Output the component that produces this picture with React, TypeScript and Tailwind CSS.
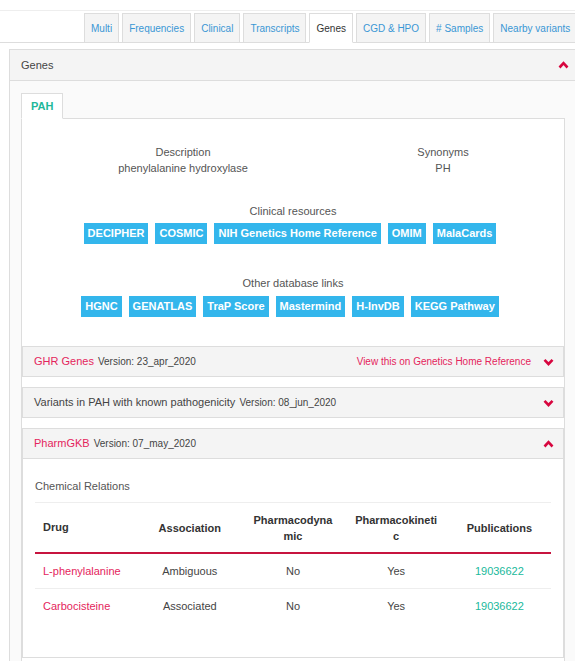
import { ReactNode } from 'react'

const tabs = ['Multi', 'Frequencies', 'Clinical', 'Transcripts', 'Genes', 'CGD & HPO', '# Samples', 'Nearby variants']
const clinical = ['DECIPHER', 'COSMIC', 'NIH Genetics Home Reference', 'OMIM', 'MalaCards']
const otherLinks = ['HGNC', 'GENATLAS', 'TraP Score', 'Mastermind', 'H-InvDB', 'KEGG Pathway']

const relations = [
  { drug: 'L-phenylalanine', association: 'Ambiguous', pd: 'No', pk: 'Yes', pub: '19036622' },
  { drug: 'Carbocisteine', association: 'Associated', pd: 'No', pk: 'Yes', pub: '19036622' },
]

function Chevron({ up }: { up?: boolean }) {
  return (
    <svg width="11" height="8" viewBox="0 0 11 8" className="shrink-0">
      <polyline
        points={up ? '1.5,6.5 5.5,2.2 9.5,6.5' : '1.5,1.8 5.5,6 9.5,1.8'}
        fill="none"
        stroke="#d7063f"
        strokeWidth="2.6"
      />
    </svg>
  )
}

function LinkButtons({ items }: { items: string[] }) {
  return (
    <div className="flex justify-center gap-[7px] pr-[6px]">
      {items.map((item) => (
        <span key={item} className="h-[21px] bg-[#33b6ec] px-[4px] text-[11px] leading-[21px] font-bold text-white">
          {item}
        </span>
      ))}
    </div>
  )
}

function SubPanelHeader({ title, version, red, right, up }: { title: string; version: string; red?: boolean; right?: ReactNode; up?: boolean }) {
  return (
    <div className="flex h-[29px] items-center bg-[#f4f4f4] pr-[9px] pl-[11px]">
      <span className={`text-[11px] ${red ? 'text-[#e4255c]' : 'text-[#444]'}`}>{title}</span>
      <span className="ml-[4px] text-[10px] text-[#444]">Version: {version}</span>
      <div className="flex-1" />
      {right}
      <div className="ml-[12px] pt-[1px]">
        <Chevron up={up} />
      </div>
    </div>
  )
}

export default function App() {
  return (
    <div className="h-[661px] w-[575px] overflow-hidden bg-white font-['Liberation_Sans',Arial,sans-serif] text-[#444]">
      <div className="h-[11px] border-b border-[#eee]" />
      <div className="mt-[2px] flex h-[30px] items-end border-b border-[#ddd] pl-[84px] whitespace-nowrap">
        {tabs.map((tab) => {
          const active = tab === 'Genes'
          return (
            <div
              key={tab}
              className={`-mb-px mr-[3px] flex h-[30px] shrink-0 items-center border px-[6px] text-[10px] ${
                active ? 'border-[#ddd] border-b-white bg-white text-[#333]' : 'border-[#ddd] bg-[#f4f4f4] text-[#3a97d4]'
              }`}
            >
              {tab}
            </div>
          )
        })}
      </div>

      <div className="mt-[6px] ml-[9px] w-[568px] border border-[#ddd]">
        <div className="flex h-[31px] items-center justify-between border-b border-[#ddd] bg-[#f4f4f4] pr-[7px] pl-[11px]">
          <span className="text-[11px] text-[#444]">Genes</span>
          <Chevron up />
        </div>

        <div className="bg-[#fafafa] px-[11px] pt-[12px] pb-[20px]">
          <div className="flex">
            <div className="-mb-px flex h-[26px] items-center border border-[#ddd] border-b-white bg-white px-[9px] text-[11px] font-bold text-[#1fb89a]">
              PAH
            </div>
          </div>
          <div className="border border-[#ddd] bg-white pb-[20px]">
            <div className="flex pt-[25px] text-[11px] leading-[16px] text-[#555]">
              <div className="ml-[31px] w-[260px] text-center">
                <div>Description</div>
                <div>phenylalanine hydroxylase</div>
              </div>
              <div className="ml-[40px] w-[180px] text-center">
                <div>Synonyms</div>
                <div>PH</div>
              </div>
            </div>

            <div className="mt-[27px] text-center text-[11px] leading-[16px] text-[#555]">Clinical resources</div>
            <div className="mt-[4px]">
              <LinkButtons items={clinical} />
            </div>

            <div className="mt-[31px] text-center text-[11px] leading-[16px] text-[#555]">Other database links</div>
            <div className="mt-[5px]">
              <LinkButtons items={otherLinks} />
            </div>

            <div className="mt-[29px] border border-[#ddd]">
              <SubPanelHeader
                title="GHR Genes"
                version="23_apr_2020"
                red
                right={<span className="text-[10px] text-[#e4255c]">View this on Genetics Home Reference</span>}
              />
            </div>

            <div className="mt-[10px] border border-[#ddd]">
              <SubPanelHeader title="Variants in PAH with known pathogenicity" version="08_jun_2020" />
            </div>

            <div className="mt-[10px] border border-[#ddd]">
              <SubPanelHeader title="PharmGKB" version="07_may_2020" red up />
              <div className="border-t border-[#ddd] bg-white px-[12px] pt-[19px] pb-[34px]">
                <div className="text-[11px] leading-[16px] text-[#555]">Chemical Relations</div>
                <div className="mt-[8px] border-t border-[#eee]" />
                <table className="w-full table-fixed border-collapse text-[11px]">
                  <thead>
                    <tr className="h-[50px] border-b-2 border-[#c7143f] text-[#333]">
                      <th className="pl-[8px] text-left font-bold">Drug</th>
                      <th className="px-[10px] text-center leading-[16px] font-bold break-all">Association</th>
                      <th className="px-[10px] text-center leading-[16px] font-bold break-all">Pharmacodynamic</th>
                      <th className="px-[10px] text-center leading-[16px] font-bold break-all">Pharmacokinetic</th>
                      <th className="px-[10px] text-center leading-[16px] font-bold break-all">Publications</th>
                    </tr>
                  </thead>
                  <tbody>
                    {relations.map((row, index) => (
                      <tr key={row.drug} className={`h-[35px] ${index === 0 ? 'border-b border-[#eee]' : ''}`}>
                        <td className="pl-[8px] text-[#e4255c]">{row.drug}</td>
                        <td className="text-center text-[#444]">{row.association}</td>
                        <td className="text-center text-[#444]">{row.pd}</td>
                        <td className="text-center text-[#444]">{row.pk}</td>
                        <td className="text-center text-[#20b99b]">{row.pub}</td>
                      </tr>
                    ))}
                  </tbody>
                </table>
              </div>
            </div>
          </div>
        </div>
      </div>
    </div>
  )
}
